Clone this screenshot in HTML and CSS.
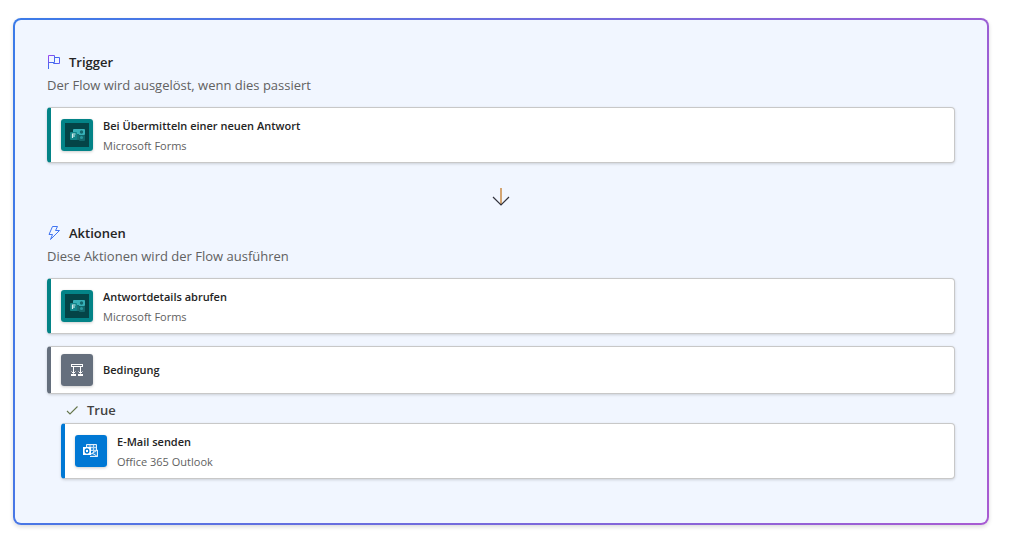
FILE: index.html
```html
<!DOCTYPE html>
<html lang="de">
<head>
  <meta charset="UTF-8">
  <meta name="viewport" content="width=device-width, initial-scale=1.0">
  <title>Flow</title>
  <link rel="stylesheet" href="styles.css">
</head>
<body>
  <!-- Shared icons -->
  <svg class="sprite" aria-hidden="true">
    <defs>
      <linearGradient id="accent" x1="0" y1="0" x2="1" y2="1">
        <stop offset="0" stop-color="#a044f0"/>
        <stop offset="0.45" stop-color="#3d6cf0"/>
        <stop offset="1" stop-color="#7a4df5"/>
      </linearGradient>
    </defs>
    <symbol id="forms" viewBox="0 0 32 32">
      <rect width="32" height="32" fill="#038387"/>
      <rect x="4" y="4" width="24" height="24" fill="#044447"/>
      <rect x="12" y="10" width="12" height="6" rx="1" fill="#37b0b7"/>
      <rect x="12" y="15" width="6" height="6" fill="#197074"/>
      <rect x="18" y="16" width="6" height="6" rx="1" fill="#12686c"/>
      <circle cx="20.5" cy="13" r="1.7" fill="#12686c"/>
      <circle cx="20.5" cy="18.5" r="1.5" fill="#2b999e"/>
      <rect x="9" y="13" width="7" height="8" rx="1" fill="#128489"/>
      <path d="M11.5 19v-4h3M11.5 17h2.500" fill="none" stroke="#d5eeee" stroke-width="1.2"/>
    </symbol>
  </svg>

  <main class="panel">
    <section>
      <h2>
        <svg class="icon" viewBox="0 0 14 16" aria-hidden="true">
          <path d="M1.5 15V1.5H7.5V8.5H1.5M7.5 3.5H12.5V9.5H6.5V8.5" fill="none" stroke="url(#accent)"/>
        </svg>
        Trigger
      </h2>
      <p class="hint">Der Flow wird ausgelöst, wenn dies passiert</p>
      <div class="card forms">
        <svg class="logo" aria-hidden="true"><use href="#forms"/></svg>
        <div>
          <h3>Bei Übermitteln einer neuen Antwort</h3>
          <p>Microsoft Forms</p>
        </div>
      </div>
    </section>

    <svg class="arrow" viewBox="0 0 20 20" aria-hidden="true">
      <path d="M10 1V18" fill="none" stroke="#c98a45" stroke-width="1.5"/>
      <path d="M2 10L10 18L18 10" fill="none" stroke="#33333d" stroke-width="1.2"/>
    </svg>

    <section>
      <h2>
        <svg class="icon" viewBox="0 0 14 16" aria-hidden="true">
          <path d="M5.5 1.5H10.5L8.5 5.5H12.5L3.5 14.5L5.5 9.5H2Z" fill="none" stroke="#3f74f2"/>
        </svg>
        Aktionen
      </h2>
      <p class="hint">Diese Aktionen wird der Flow ausführen</p>
      <div class="card forms">
        <svg class="logo" aria-hidden="true"><use href="#forms"/></svg>
        <div>
          <h3>Antwortdetails abrufen</h3>
          <p>Microsoft Forms</p>
        </div>
      </div>
      <div class="card condition">
        <svg class="logo" viewBox="0 0 32 32" aria-hidden="true">
          <rect width="32" height="32" fill="#656f7d"/>
          <rect x="10.5" y="10.5" width="11" height="2" fill="none" stroke="#fff"/>
          <path d="M12.5 13v6M19.5 13v6" stroke="#fff"/>
          <path d="M10.5 17.5l2 2 2-2M17.5 17.5l2 2 2-2" fill="none" stroke="#fff"/>
          <path d="M10 20h5v2h-5zM17 20h5v2h-5z" fill="#fff"/>
        </svg>
        <h3>Bedingung</h3>
      </div>

      <!-- True branch of the condition -->
      <div class="branch">
        <h4>
          <svg class="check" viewBox="0 0 14 14" aria-hidden="true">
            <path d="M2 8L5 11L12.5 3.5" fill="none" stroke="#66764c" stroke-width="1.1"/>
          </svg>
          True
        </h4>
        <div class="card outlook">
          <svg class="logo" viewBox="0 0 32 32" aria-hidden="true">
            <rect width="32" height="32" fill="#0078d4"/>
            <path d="M11.5 12V9.5H21.5V18" fill="#3c96de" stroke="#e5f1fb"/>
            <path d="M15 10v8M18.5 10v8M13 12.5h8M13 15.5h8" stroke="#b9dbf4"/>
            <path d="M15 21.5H22.5V15L16 19" fill="#2b8dda" stroke="#e5f1fb"/>
            <path d="M17 18l5.5 3.5" stroke="#e5f1fb"/>
            <rect x="8" y="12" width="8" height="8" fill="#fff"/>
            <ellipse cx="12" cy="16" rx="1.8" ry="2" fill="none" stroke="#0078d4" stroke-width="1.3"/>
          </svg>
          <div>
            <h3>E-Mail senden</h3>
            <p>Office 365 Outlook</p>
          </div>
        </div>
      </div>
    </section>
  </main>
</body>
</html>
```
FILE: styles.css
```css
* {
  margin: 0;
  padding: 0;
  box-sizing: border-box;
}

body {
  font-family: 'Segoe UI', 'Open Sans', 'Noto Sans', sans-serif;
  background: #fff;
  color: #242424;
  padding: 18px 25px 11px 13px;
}

.sprite {
  position: absolute;
  width: 0;
  height: 0;
}

.panel {
  display: flex;
  flex-direction: column;
  padding: 32px 32px 44px;
  border: 2px solid transparent;
  border-radius: 8px;
  background:
    linear-gradient(#f1f6ff, #f1f6ff) padding-box,
    linear-gradient(105deg, #3b7be8, #a85bd2) border-box;
  box-shadow: 0 2px 4px rgba(0, 0, 0, 0.14);
}

h2,
h4 {
  display: flex;
  align-items: center;
  font-size: 13px;
  font-weight: 600;
  line-height: 20px;
}

h2 {
  gap: 8px;
}

.icon {
  width: 14px;
  height: 16px;
}

.hint {
  margin: 4px 0 12px;
  font-size: 13px;
  line-height: 19px;
  color: #616161;
}

/* Step cards */
.card {
  display: flex;
  align-items: center;
  gap: 10px;
  padding: 7px 10px;
  background: #fff;
  border: 1px solid #c8c8c8;
  border-left: 4px solid #038387;
  border-radius: 4px;
  box-shadow: 0 1px 3px rgba(0, 0, 0, 0.16);
}

.card + .card {
  margin-top: 12px;
}

.card h3 {
  font-size: 11px;
  font-weight: 600;
  line-height: 22px;
}

.card p {
  font-size: 11px;
  line-height: 18px;
  color: #616161;
}

.condition {
  border-left-color: #656f7d;
}

.outlook {
  border-left-color: #0078d4;
}

.logo {
  flex: none;
  width: 32px;
  height: 32px;
  border-radius: 3px;
  box-shadow: 0 1px 3px rgba(0, 0, 0, 0.2);
}

.arrow {
  align-self: center;
  width: 20px;
  height: 20px;
  margin: 24px 0 16px;
}

.branch {
  padding: 6px 0 0 14px;
}

.branch h4 {
  gap: 8px;
  padding-left: 4px;
  margin-bottom: 3px;
  color: #424242;
}

.check {
  width: 14px;
  height: 14px;
}
```
